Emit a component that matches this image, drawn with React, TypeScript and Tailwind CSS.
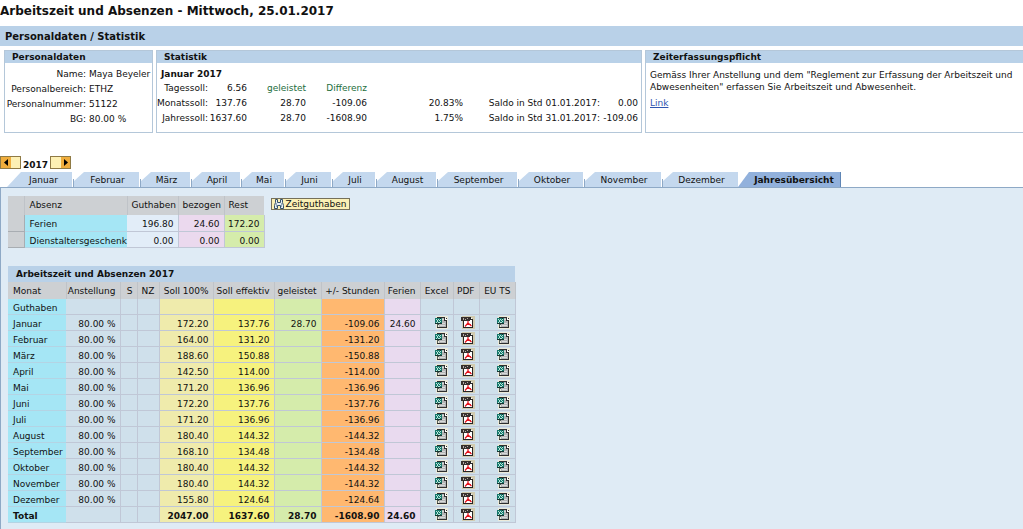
import { useState } from 'react';
import clsx from 'clsx';

const tabs = [
  { label: 'Januar', width: 'w-[65px]' },
  { label: 'Februar', width: 'w-[67px]' },
  { label: 'März', width: 'w-[51px]' },
  { label: 'April', width: 'w-[50px]' },
  { label: 'Mai', width: 'w-[44px]' },
  { label: 'Juni', width: 'w-[47px]' },
  { label: 'Juli', width: 'w-[44px]' },
  { label: 'August', width: 'w-[61px]' },
  { label: 'September', width: 'w-[81px]' },
  { label: 'Oktober', width: 'w-[66px]' },
  { label: 'November', width: 'w-[78px]' },
  { label: 'Dezember', width: 'w-[77px]' }
];

const absences = [
  { name: 'Ferien', credit: '196.80', used: '24.60', rest: '172.20' },
  { name: 'Dienstaltersgeschenk', credit: '0.00', used: '0.00', rest: '0.00' }
];

const months = [
  { name: 'Januar', full: '172.20', effective: '137.76', worked: '28.70', diff: '-109.06', holidays: '24.60' },
  { name: 'Februar', full: '164.00', effective: '131.20', diff: '-131.20' },
  { name: 'März', full: '188.60', effective: '150.88', diff: '-150.88' },
  { name: 'April', full: '142.50', effective: '114.00', diff: '-114.00' },
  { name: 'Mai', full: '171.20', effective: '136.96', diff: '-136.96' },
  { name: 'Juni', full: '172.20', effective: '137.76', diff: '-137.76' },
  { name: 'Juli', full: '171.20', effective: '136.96', diff: '-136.96' },
  { name: 'August', full: '180.40', effective: '144.32', diff: '-144.32' },
  { name: 'September', full: '168.10', effective: '134.48', diff: '-134.48' },
  { name: 'Oktober', full: '180.40', effective: '144.32', diff: '-144.32' },
  { name: 'November', full: '180.40', effective: '144.32', diff: '-144.32' },
  { name: 'Dezember', full: '155.80', effective: '124.64', diff: '-124.64' }
];

const columns = [
  { label: 'Monat', width: 'w-[58px]' },
  { label: 'Anstellung', width: 'w-[54px]' },
  { label: 'S', width: 'w-[17px]' },
  { label: 'NZ', width: 'w-[22px]' },
  { label: 'Soll 100%', width: 'w-[54px]' },
  { label: 'Soll effektiv', width: 'w-[61px]' },
  { label: 'geleistet', width: 'w-[47px]' },
  { label: '+/- Stunden', width: 'w-[63px]' },
  { label: 'Ferien', width: 'w-[36px]' },
  { label: 'Excel', width: 'w-[33px]' },
  { label: 'PDF', width: 'w-[26px]' },
  { label: 'EU TS', width: 'w-[36px]' }
];

const border = 'border-r border-b border-[#c0c7d6]';
const cell = `${border} p-0 pt-[3px] pr-1 text-right leading-3`;
const nameCell = 'border-b border-[#b4d4e4] bg-[#a5e6f5] p-0 pt-[3px] pl-[5px] leading-3';

function ExcelIcon() {
  return (
    <svg width="14" height="13" viewBox="0 0 14 13" shapeRendering="crispEdges">
      <path d="M1 0h12v13H1z" fill="#eceada" />
      <path d="M4 5h7v6H4zM6 2h4v4H6z" fill="#b3b5b5" />
      <path d="M2 1h8v1H2zM2 11h10v1H2zM11 5h1v6h-1zM9 2h1v3H9zM10 4h2v1h-2zM11 2h1v1h-1z" fill="#2f2f2f" />
      <path d="M10 2h1v2h-1zM11 3h1v1h-1z" fill="#fff" />
      <path d="M2 8h1v3H2zM3 8h1v1H3z" fill="#55605a" />
      <path d="M0 2h7v6H0z" fill="#16786b" />
      <path d="M0 7h7v1H0zM5 2h1v1H5z" fill="#15332f" />
      <path d="M1 3h1v1H1zM2 4h1v2H2zM1 6h1v1H1zM3 3h1v1H3zM3 6h1v1H3zM5 3h1v1H5zM4 4h1v1H4zM5 5h1v1H5zM4 6h1v1H4z" fill="#b9e6da" />
      <path d="M7 3h2v1H7zM7 7h3v1H7zM5 9h5v1H5z" fill="#d8dada" />
    </svg>
  );
}

function PdfIcon() {
  return (
    <svg width="14" height="13" viewBox="0 0 14 13" shapeRendering="crispEdges">
      <path d="M1 0h13v13H1z" fill="#d2cbb0" />
      <path d="M3 2h8v9H3z" fill="#fff" />
      <path d="M2 1h8v1H2zM11 4h1v8h-1zM2 4h1v8H2zM2 11h10v1H2zM9 1h1v3H9zM10 3h2v1h-2z" fill="#262626" />
      <path d="M0 1h9v4H0z" fill="#37302e" />
      <path d="M2 2h1v2H2zM4 3h1v1H4zM6 2h1v1H6z" fill="#b5aea8" />
      <path d="M7 5v2L4 10.500M7 7l3.500 3M5 8.500h5" fill="none" stroke="#e3141e" strokeWidth="1.200" shapeRendering="auto" />
    </svg>
  );
}

function BinocularsIcon() {
  return (
    <svg width="10" height="10" viewBox="0 0 10 10">
      <path d="M1.500.5h2v3h3v-3h2v3l1 3v3h-3v-3h-3v3h-3v-3l1-3z" fill="#e6eef4" stroke="#35506a" />
      <path d="M2.500 4v4M7.500 4v4" stroke="#8fa9c0" />
    </svg>
  );
}

function Exports({ row }: { row: string }) {
  return (
    <>
      {['Excel', 'PDF', 'EU TS'].map(type => (
        <td key={type} className={clsx(border, 'bg-[#cfe0eb] p-0 pr-1')}>
          <button type="button" aria-label={`${type} ${row}`} className="block ml-auto cursor-pointer">
            {type === 'PDF' ? <PdfIcon /> : <ExcelIcon />}
          </button>
        </td>
      ))}
    </>
  );
}

function Panel({ title, className, children }: { title: string; className: string; children: React.ReactNode }) {
  return (
    <section className={clsx('h-[83px] border border-[#b4c7d9]', className)}>
      <h3 className="h-3 bg-[#b9d1e8] pl-[7px] font-bold leading-3">{title}</h3>
      {children}
    </section>
  );
}

export default function App() {
  const [year, setYear] = useState(2017);
  const [active, setActive] = useState('Jahresübersicht');

  return (
    <div className="min-h-screen flex flex-col bg-white text-[#111] whitespace-nowrap overflow-x-hidden font-['Verdana','DejaVu_Sans',sans-serif] text-[9px] leading-[15px]">
      <h1 className="h-[26px] text-[12px] font-bold leading-[22px]">Arbeitszeit und Absenzen - Mittwoch, 25.01.2017</h1>
      <h2 className="h-5 bg-[#b9d1e8] pl-[5px] text-[10px] font-bold leading-[21px]">Personaldaten / Statistik</h2>

      <div className="flex gap-[3px] border-t border-white pt-[3px] pl-1">
        <Panel title="Personaldaten" className="w-[149px]">
          <dl className="grid grid-cols-[81px_1fr] gap-x-[3px] pt-1">
            <dt className="text-right">Name:</dt>
            <dd>Maya Beyeler</dd>
            <dt className="text-right">Personalbereich:</dt>
            <dd>ETHZ</dd>
            <dt className="text-right">Personalnummer:</dt>
            <dd>51122</dd>
            <dt className="text-right">BG:</dt>
            <dd>80.00 %</dd>
          </dl>
        </Panel>

        <Panel title="Statistik" className="w-[486px]">
          <h4 className="pt-[5px] pl-1 font-bold leading-[13px]">Januar 2017</h4>
          <table className="w-[481px] table-fixed border-collapse text-right leading-[15px]">
            <colgroup>
              <col className="w-[51px]" />
              <col className="w-[39px]" />
              <col className="w-[59px]" />
              <col className="w-[61px]" />
              <col className="w-[96px]" />
              <col className="w-[137px]" />
              <col className="w-[38px]" />
            </colgroup>
            <tbody>
              <tr>
                <td>Tagessoll:</td>
                <td>6.56</td>
                <td className="text-[#1c6e3c]">geleistet</td>
                <td className="text-[#1c6e3c]">Differenz</td>
                <td colSpan={3}></td>
              </tr>
              <tr>
                <td>Monatssoll:</td>
                <td>137.76</td>
                <td>28.70</td>
                <td>-109.06</td>
                <td>20.83%</td>
                <td>Saldo in Std 01.01.2017:</td>
                <td>0.00</td>
              </tr>
              <tr>
                <td>Jahressoll:</td>
                <td>1637.60</td>
                <td>28.70</td>
                <td>-1608.90</td>
                <td>1.75%</td>
                <td>Saldo in Std 31.01.2017:</td>
                <td>-109.06</td>
              </tr>
            </tbody>
          </table>
        </Panel>

        <Panel title="Zeiterfassungspflicht" className="flex-1 border-r-0">
          <p className="pt-1.5 pl-1 leading-3">
            Gemäss Ihrer Anstellung und dem "Reglement zur Erfassung der Arbeitszeit und
            <br />
            Abwesenheiten" erfassen Sie Arbeitszeit und Abwesenheit.
          </p>
          <a href="#" className="ml-1 mt-1 inline-block leading-3 text-[#2f55b0] underline">Link</a>
        </Panel>
      </div>

      <div className="mt-[23px] flex h-4 items-start gap-0.5">
        <button
          type="button"
          aria-label="Vorheriges Jahr"
          onClick={() => setYear(year - 1)}
          className="flex h-[13px] w-[21px] items-center border border-[#8f7a45] bg-[#fdf0b4]"
        >
          <span className="flex h-full w-[10px] items-center justify-center bg-[#f0ad3c]">
            <svg width="4" height="7" viewBox="0 0 4 7"><path d="M4 0v7L0 3.500z" /></svg>
          </span>
        </button>
        <span className="w-[25px] pt-0.5 text-center font-bold">{year}</span>
        <button
          type="button"
          aria-label="Nächstes Jahr"
          onClick={() => setYear(year + 1)}
          className="flex h-[13px] w-[21px] items-center justify-end border border-[#8f7a45] bg-[#fdf0b4]"
        >
          <span className="flex h-full w-[9px] items-center justify-center bg-[#f0ad3c]">
            <svg width="4" height="7" viewBox="0 0 4 7"><path d="M0 0v7l4-3.500z" /></svg>
          </span>
        </button>
      </div>

      <nav className="flex h-4 border-b border-[#8ea9c6] pl-[7px] leading-4">
        {tabs.map((tab, i) => (
          <div key={tab.label} className={clsx('flex shrink-0 items-end', tab.width, i > 0 && 'pl-px')}>
            {i > 0 && <span className="h-2 w-px bg-[#8ea9c6]"></span>}
            <button
              type="button"
              onClick={() => setActive(tab.label)}
              className={clsx(
                'h-[15px] flex-1 cursor-pointer pt-px leading-[15px]',
                i === 0
                  ? 'pl-2 [clip-path:polygon(0_100%,14px_0,100%_0,100%_100%)]'
                  : 'pl-0.5 [clip-path:polygon(0_100%,0_9px,10px_0,100%_0,100%_100%)]',
                active === tab.label ? 'bg-[#92b1dc] font-bold' : 'bg-[#c4d8ee]'
              )}
            >
              {tab.label}
            </button>
          </div>
        ))}
        <button
          type="button"
          onClick={() => setActive('Jahresübersicht')}
          className={clsx(
            'h-[15px] w-[103px] shrink-0 cursor-pointer border-r border-[#5f85b5] pt-px pl-2.5 leading-[15px] [clip-path:polygon(0_100%,11px_0,100%_0,100%_100%)]',
            active === 'Jahresübersicht' ? 'bg-[#92b1dc] font-bold' : 'bg-[#c4d8ee]'
          )}
        >
          Jahresübersicht
        </button>
      </nav>

      <main className="flex-1 border-l border-[#8ea9c6] bg-[#dfebf5] pt-2 pl-[7px]">
        <div className="flex items-start gap-1.5">
          <table className="w-[256px] table-fixed border-collapse leading-[15px]">
            <colgroup>
              <col className="w-4" />
              <col className="w-[103px]" />
              <col className="w-[51px]" />
              <col className="w-[46px]" />
              <col className="w-[40px]" />
            </colgroup>
            <thead>
              <tr className="h-[19px] bg-[#cdd0d3] text-left">
                <th className="border-r border-[#bfc3c8]"></th>
                <th className="border-r border-[#bfc3c8] pl-[5px] font-normal">Absenz</th>
                <th className="border-r border-[#bfc3c8] pl-1 font-normal">Guthaben</th>
                <th className="border-r border-[#bfc3c8] pl-1 font-normal">bezogen</th>
                <th className="pl-1 font-normal">Rest</th>
              </tr>
            </thead>
            <tbody>
              {absences.map(row => (
                <tr key={row.name} className="h-4">
                  <td className="border-r border-b border-[#a8adb2] bg-[#cdd0d3] p-0">
                    <button type="button" aria-label={`${row.name} auswählen`} className="block h-[14px] w-full"></button>
                  </td>
                  <td className={nameCell}>{row.name}</td>
                  <td className={clsx(cell, 'bg-[#e2edf8]')}>{row.credit}</td>
                  <td className={clsx(cell, 'bg-[#ebd9ee]')}>{row.used}</td>
                  <td className={clsx(cell, 'bg-[#d5ecab]')}>{row.rest}</td>
                </tr>
              ))}
            </tbody>
          </table>
          <button type="button" className="mt-0.5 flex h-3 w-[79px] cursor-pointer items-center justify-center gap-0.5 border border-[#75705a] bg-[#fbf0b5] leading-3">
            <BinocularsIcon />
            Zeitguthaben
          </button>
        </div>

        <h3 className="mt-[18px] h-4 w-[507px] bg-[#b9d1e8] pl-2 font-bold leading-[17px]">Arbeitszeit und Absenzen {year}</h3>
        <table className="w-[507px] table-fixed border-collapse leading-[15px]">
          <thead>
            <tr className="h-[17px] bg-[#cdd0d3]">
              {columns.map((col, i) => (
                <th key={col.label} className={clsx('border-r border-[#bfc3c8] p-0 pt-0.5 font-normal', col.width, i === 0 ? 'pl-[5px] text-left' : 'pr-1 text-right')}>
                  {col.label}
                </th>
              ))}
            </tr>
          </thead>
          <tbody>
            <tr className="h-4">
              <td className={nameCell}>Guthaben</td>
              <td className={clsx(cell, 'bg-[#cfe0eb]')}></td>
              <td className={clsx(cell, 'bg-[#cfe0eb]')}></td>
              <td className={clsx(cell, 'bg-[#cfe0eb]')}></td>
              <td className={clsx(cell, 'bg-[#efebac]')}></td>
              <td className={clsx(cell, 'bg-[#f6f27e]')}></td>
              <td className={clsx(cell, 'bg-[#d5ecab]')}></td>
              <td className={clsx(cell, 'bg-[#ffb870]')}></td>
              <td className={clsx(cell, 'bg-[#e9daef]')}></td>
              <td className={clsx(cell, 'bg-[#cfe0eb]')}></td>
              <td className={clsx(cell, 'bg-[#cfe0eb]')}></td>
              <td className={clsx(cell, 'bg-[#cfe0eb]')}></td>
            </tr>
            {months.map(m => (
              <tr key={m.name} className="h-4">
                <td className={nameCell}>{m.name}</td>
                <td className={clsx(cell, 'bg-[#cfe0eb]')}>80.00 %</td>
                <td className={clsx(cell, 'bg-[#cfe0eb]')}></td>
                <td className={clsx(cell, 'bg-[#cfe0eb]')}></td>
                <td className={clsx(cell, 'bg-[#efebac]')}>{m.full}</td>
                <td className={clsx(cell, 'bg-[#f6f27e]')}>{m.effective}</td>
                <td className={clsx(cell, 'bg-[#d5ecab]')}>{m.worked}</td>
                <td className={clsx(cell, 'bg-[#ffb870]')}>{m.diff}</td>
                <td className={clsx(cell, 'bg-[#e9daef]')}>{m.holidays}</td>
                <Exports row={m.name} />
              </tr>
            ))}
            <tr className="h-4 font-bold">
              <td className={nameCell}>Total</td>
              <td className={clsx(cell, 'bg-[#cfe0eb]')}></td>
              <td className={clsx(cell, 'bg-[#cfe0eb]')}></td>
              <td className={clsx(cell, 'bg-[#cfe0eb]')}></td>
              <td className={clsx(cell, 'bg-[#efebac]')}>2047.00</td>
              <td className={clsx(cell, 'bg-[#f6f27e]')}>1637.60</td>
              <td className={clsx(cell, 'bg-[#d5ecab]')}>28.70</td>
              <td className={clsx(cell, 'bg-[#ffb870]')}>-1608.90</td>
              <td className={clsx(cell, 'bg-[#e9daef]')}>24.60</td>
              <Exports row="Total" />
            </tr>
          </tbody>
        </table>
      </main>
    </div>
  );
}
